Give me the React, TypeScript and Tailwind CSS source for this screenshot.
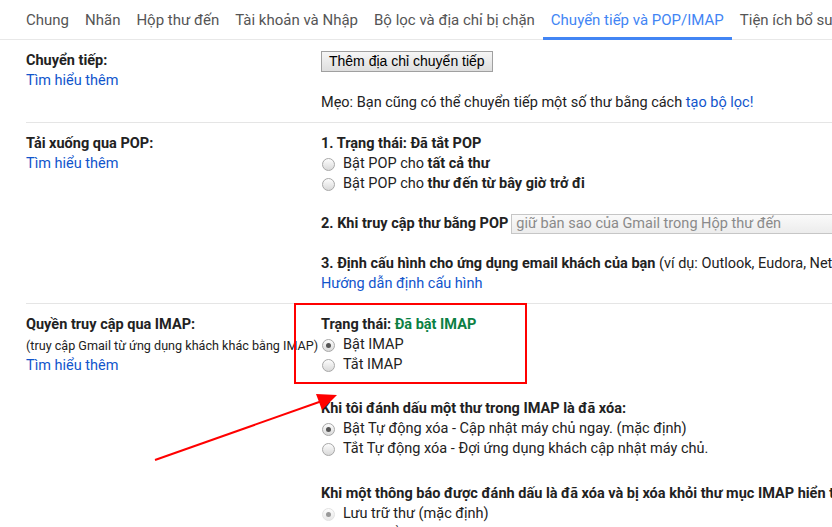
import React from 'react'

const tabs = [
  'Chung',
  'Nhãn',
  'Hộp thư đến',
  'Tài khoản và Nhập',
  'Bộ lọc và địa chỉ bị chặn',
  'Chuyển tiếp và POP/IMAP',
  'Tiện ích bổ sung',
]

const Radio = ({ checked = false, disabled = false }: { checked?: boolean; disabled?: boolean }) => (
  <span
    className={`relative inline-flex h-[13px] w-[13px] shrink-0 items-center justify-center rounded-full border bg-gradient-to-b from-[#fdfdfd] to-[#d9d9d9] ${
      disabled ? 'border-[#cfcfcf] opacity-60' : 'border-[#a8a8a8]'
    }`}
  >
    {checked && <span className="h-[5px] w-[5px] rounded-full bg-[#555]" />}
  </span>
)

const Option = ({
  children,
  checked,
  disabled,
}: {
  children: React.ReactNode
  checked?: boolean
  disabled?: boolean
}) => (
  <label className="flex h-5 items-center gap-[8px] whitespace-nowrap pl-[1px]">
    <Radio checked={checked} disabled={disabled} />
    <span>{children}</span>
  </label>
)

const Learn = () => <a className="block h-5 leading-5 text-[#1155cc]">Tìm hiểu thêm</a>

const Section = ({
  left,
  children,
  last = false,
}: {
  left: React.ReactNode
  children: React.ReactNode
  last?: boolean
}) => (
  <div className={`grid grid-cols-[295px_1fr] pt-[11px] pb-[9px] ${last ? '' : 'border-b border-[#e5e5e5]'}`}>
    <div className="whitespace-nowrap">{left}</div>
    <div className="whitespace-nowrap">{children}</div>
  </div>
)

export default function App() {
  return (
    <div className="relative h-[527px] w-[832px] overflow-hidden bg-white font-['Roboto',sans-serif] text-[14.5px] leading-5 text-[#222]">
      {/* tabs */}
      <div className="flex h-10 border-b border-[#e8e8e8] pl-[18px] whitespace-nowrap">
        {tabs.map((t) => {
          const active = t === 'Chuyển tiếp và POP/IMAP'
          return (
            <div
              key={t}
              className={`flex h-10 items-center px-2 text-[15px] ${
                active ? 'border-b-[3px] border-[#4285f4] pt-[3px] text-[#4285f4]' : 'text-[#555]'
              }`}
            >
              {t}
            </div>
          )
        })}
      </div>

      <div className="pl-[26px]">
        <Section
          left={
            <>
              <div className="font-bold">Chuyển tiếp:</div>
              <Learn />
            </>
          }
        >
          <button className="h-[21px] border border-[#a0a0a0] bg-gradient-to-b from-[#f6f6f6] to-[#dedede] px-[7px] font-['Liberation_Sans',Arial,sans-serif] text-[14px] leading-[19px] text-black">
            Thêm địa chỉ chuyển tiếp
          </button>
          <div className="mt-[21px]">
            Mẹo: Bạn cũng có thể chuyển tiếp một số thư bằng cách{' '}
            <a className="text-[#1155cc]">tạo bộ lọc!</a>
          </div>
        </Section>

        <Section
          left={
            <>
              <div className="font-bold">Tải xuống qua POP:</div>
              <Learn />
            </>
          }
        >
          <div className="font-bold">1. Trạng thái: Đã tắt POP</div>
          <Option>
            Bật POP cho <b>tất cả thư</b>
          </Option>
          <Option>
            Bật POP cho <b>thư đến từ bây giờ trở đi</b>
          </Option>
          <div className="mt-5 flex h-5 items-center gap-[3px]">
            <b>2. Khi truy cập thư bằng POP</b>
            <div className="flex h-5 w-[340px] items-center border border-[#c6c6c6] bg-gradient-to-b from-[#fafafa] to-[#ececec] px-[4px] text-[#8a8a8a]">
              giữ bản sao của Gmail trong Hộp thư đến
            </div>
          </div>
          <div className="mt-5">
            <b>3. Định cấu hình cho ứng dụng email khách của bạn</b> (ví dụ: Outlook, Eudora, Netscape Mail)
          </div>
          <a className="block text-[#1155cc]">Hướng dẫn định cấu hình</a>
        </Section>

        <Section
          last
          left={
            <>
              <div className="font-bold">Quyền truy cập qua IMAP:</div>
              <div className="text-[12.6px] leading-[21px]">(truy cập Gmail từ ứng dụng khách khác bằng IMAP)</div>
              <Learn />
            </>
          }
        >
          <div>
            <b>Trạng thái: </b>
            <b className="text-[#0b8043]">Đã bật IMAP</b>
          </div>
          <Option checked>Bật IMAP</Option>
          <Option>Tắt IMAP</Option>

          <div className="mt-[24px] font-bold">Khi tôi đánh dấu một thư trong IMAP là đã xóa:</div>
          <Option checked>Bật Tự động xóa - Cập nhật máy chủ ngay. (mặc định)</Option>
          <Option>Tắt Tự động xóa - Đợi ứng dụng khách cập nhật máy chủ.</Option>

          <div className="mt-[25px] font-bold">
            Khi một thông báo được đánh dấu là đã xóa và bị xóa khỏi thư mục IMAP hiển thị cuối cùng:
          </div>
          <Option checked disabled>
            <span>Lưu trữ thư (mặc định)</span>
          </Option>
          <Option disabled>
            <span>Di chuyển thư vào Thùng rác</span>
          </Option>
        </Section>
      </div>

      {/* annotation overlay */}
      <div className="pointer-events-none absolute left-[294px] top-[303px] h-[81px] w-[233px] border-2 border-[#ff0000]" />
      <svg className="pointer-events-none absolute left-0 top-0" width="832" height="527">
        <line x1="155" y1="460" x2="322" y2="401" stroke="#ff0000" strokeWidth="2" />
        <polygon points="337,395 316,394 322,410" fill="#ff0000" />
      </svg>
    </div>
  )
}
